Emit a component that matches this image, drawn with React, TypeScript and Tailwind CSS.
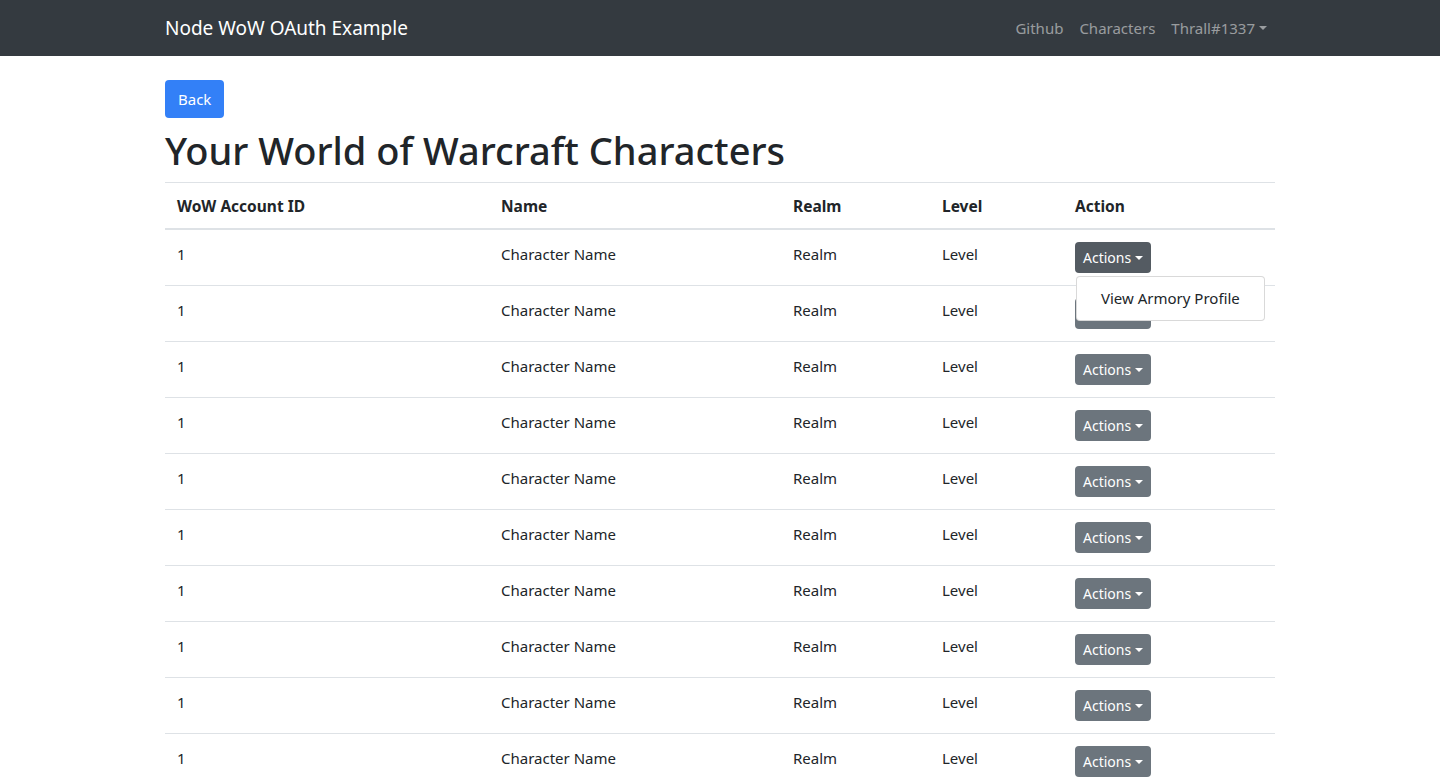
import React from 'react';

const font = { fontFamily: '"Segoe UI", "Noto Sans", "Open Sans", sans-serif' };

const Caret = () => (
  <span className="ml-[4px] inline-block w-0 h-0 align-[0.255em] border-t-[0.3em] border-t-current border-x-[0.3em] border-x-transparent" />
);

const Navbar: React.FC = () => (
  <nav className="h-14 bg-[#343a40]">
    <div className="mx-auto flex h-full w-[1140px] items-center justify-between px-[15px]">
      <a className="text-[19px] text-white">Node WoW OAuth Example</a>
      <ul className="flex items-center text-[15px] text-white/50">
        <li className="px-2">Github</li>
        <li className="px-2">Characters</li>
        <li className="flex items-center px-2">
          Thrall#1337
          <Caret />
        </li>
      </ul>
    </div>
  </nav>
);

interface RowProps {
  open?: boolean;
}

const CharacterRow: React.FC<RowProps> = ({ open }) => (
  <tr className="border-t border-[#dee2e6]">
    <td className="p-3 align-top">1</td>
    <td className="p-3 align-top">Character Name</td>
    <td className="p-3 align-top">Realm</td>
    <td className="p-3 align-top">Level</td>
    <td className="relative p-3 align-top">
      <button
        className={`flex h-[31px] items-center rounded px-2 text-[14px] text-white ${open ? 'bg-[#545b62]' : 'bg-[#6c757d]'}`}
      >
        Actions
        <Caret />
      </button>
      {open && (
        <div className="absolute left-[13px] top-[46px] z-10 rounded border border-black/15 bg-white py-2">
          <div className="whitespace-nowrap px-6 text-[15px] leading-[27px] text-[#212529]">View Armory Profile</div>
        </div>
      )}
    </td>
  </tr>
);

const App: React.FC = () => {
  const rows = Array.from({ length: 10 }, (_, i) => i);
  return (
    <div className="min-h-screen bg-white text-[15px] leading-6 text-[#212529]" style={font}>
      <Navbar />
      <div className="mx-auto mt-6 w-[1140px] px-[15px]">
        <button className="mb-2 h-[38px] rounded bg-[#3380f7] px-[13px] text-[15px] text-white">Back</button>
        <h1 className="mb-2 text-[38px] font-medium leading-[48px]">Your World of Warcraft Characters</h1>
        <table className="w-full border-collapse text-left">
          <thead>
            <tr className="border-t border-[#dee2e6] border-b-2 text-[15.5px]">
              <th className="w-[324px] px-3 pt-[11px] pb-[10px] font-bold">WoW Account ID</th>
              <th className="w-[292px] px-3 pt-[11px] pb-[10px] font-bold">Name</th>
              <th className="w-[149px] px-3 pt-[11px] pb-[10px] font-bold">Realm</th>
              <th className="w-[133px] px-3 pt-[11px] pb-[10px] font-bold">Level</th>
              <th className="px-3 pt-[11px] pb-[10px] font-bold">Action</th>
            </tr>
          </thead>
          <tbody>
            {rows.map((i) => (
              <CharacterRow key={i} open={i === 0} />
            ))}
          </tbody>
        </table>
      </div>
    </div>
  );
};

export default App;
